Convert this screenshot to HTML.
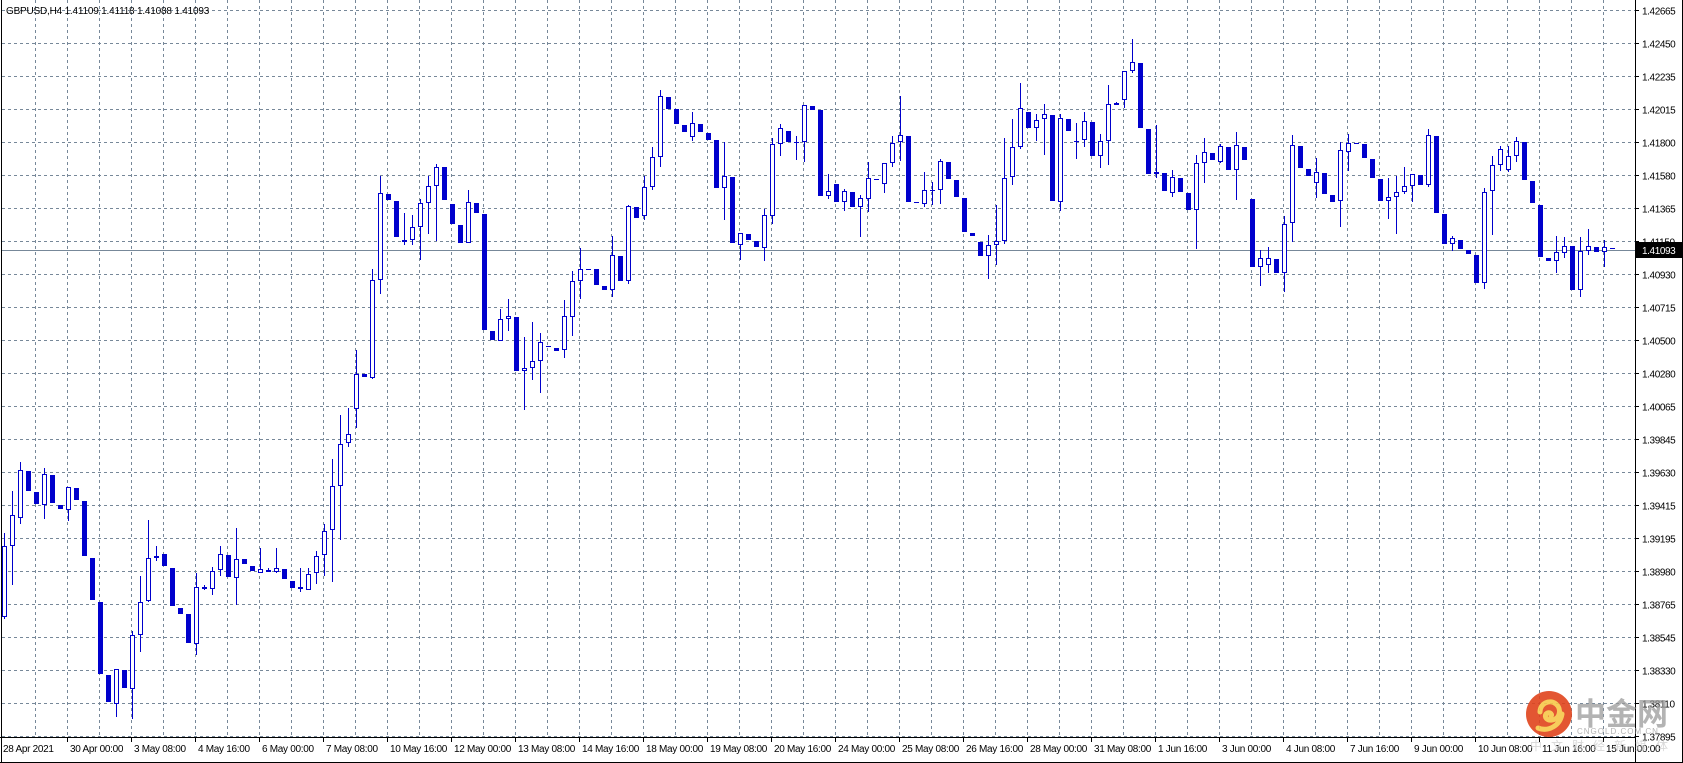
<!DOCTYPE html>
<html><head><meta charset="utf-8">
<style>
html,body{margin:0;padding:0;background:#fff;width:1683px;height:763px;overflow:hidden}
svg{display:block}
text{font-family:"Liberation Sans","Noto Sans CJK SC",sans-serif}
</style></head>
<body>
<svg id="c" width="1683" height="763" xmlns="http://www.w3.org/2000/svg" shape-rendering="crispEdges"></svg>
<script>
var S=document.getElementById('c'),h='';
function add(s){h+=s;}
for(var k=0;k<=22;k++){var y=10.5+33*k;add('<line x1="2" y1="'+y+'" x2="1635" y2="'+y+'" stroke="#778899" stroke-dasharray="3,3"/>');}
for(var k=0;k<=49;k++){var x=35.5+32*k;add('<line x1="'+x+'" y1="0" x2="'+x+'" y2="737" stroke="#778899" stroke-dasharray="3,3"/>');}
add('<line x1="2" y1="250.5" x2="1635" y2="250.5" stroke="#778899"/>');
var sets=[
{o:150,f:3/8,s:0,d:"W 1055 1245 1020 1250|W 973 1055 908 1160|W 853 982 833 998|B 856 908|B 912 945|W 864 947 848 985|B 866 942|B 946 958|W 899 961 899 990|B 901 932|B 935 1083|B 1087 1200|B 1204 1397|B 1401 1471|W 1385 1476 1383 1513|B 1387 1434|W 1292 1437 1283 1517|W 1204 1293 1135 1338|W 1088 1203 986 1206|W 1082 1089 1055 1097|B 1076 1110|B 1114 1216|B 1220 1237|B 1238 1315|W 1164 1317 1128 1347|W 1166 1169 1160 1172|W 1122 1170 1113 1187|W 1077 1121 1055 1136|B 1079 1139|W 1090 1141 1007 1214|B 1091 1105|B 1108 1123|W 1117 1127 1060 1127|W 1119 1121 1115 1125|W 1114 1125 1060 1127|B 1116 1144|B 1148 1168|W 1164 1170 1115 1178|W 1130 1173 1115 1173|W 1082 1128 1068 1158|W 1016 1080 996 1137|W 897 1013 824 1152|W 785 896 707 1040|W 756 782 688 792|W 596 691 533 742|B 598 605|W 346 607 318 610|W 115 346 68 383|B 117 132|B 136 233|W 239 245 167 253"},
{o:60,f:1/3,s:51,d:"W 502 540 465 556|W 430 502 418 600|W 379 430 348 521|W 320 379 312 543|B 322 419|B 433 491|B 495 548|W 427 550 390 550|B 429 458|B 462 809|B 814 840|W 778 842 747 842|W 769 778 717 812|B 771 932|W 925 934 831 1049|W 904 925 786 959|W 847 904 819 998|B 857 860|B 864 872|W 769 871 720 895|W 664 770 632 827|W 628 664 565 718|B 627 630|B 628 674|B 678 689|W 586 691 528 711|B 588 662|W 438 664 435 671|B 441 473|W 382 467 348 481|W 292 382 262 389|W 109 292 90 322|B 111 146|B 148 191|B 195 215|W 190 232 156 242|B 192 215|B 219 239|B 240 383|W 349 385 246 479|B 351 548|W 520 556 520 600|B 522 539|B 543 560|W 466 565 448 604|W 253 468 234 491|W 205 253 192 287|B 213 247|B 246 250 228 299|W 136 247 136 305|B 138 149|B 150 407"},
{o:20,f:1/3,s:103,d:"W 514 529 462 536|B 492 545|W 514 547 507 572|B 516 560|W 535 560 525 650|W 475 536 426 576|B 477 480|W 430 493 430 518|W 370 430 348 440|W 346 367 228 422|B 348 545|B 546 550|W 511 553 456 562|B 510 513 487 555|W 424 511 417 551|B 426 476|B 480 530|B 534 635|B 639 647|B 666 707|W 676 709 645 776|W 664 676 555 734|W 475 662 353 671|W 382 472 296 494|W 265 382 189 387|B 276 323|W 300 325 282 362|W 283 298 252 404|B 285 542|W 295 545 282 572|B 297 332|B 364 367 309 416|W 304 361 276 380|B 306 407|W 364 409 342 443|W 253 364 195 434|W 248 252 245 255|W 154 241 154 263|W 127 154 57 158|B 129 323|B 327 461|W 457 463 315 475|B 459 512|W 472 520 450 530|B 474 515|B 519 569|W 430 571 405 686|W 397 430 354 488|B 399 419"},
{o:100,f:1/3,s:152,d:"W 139 185 132 190|B 141 210|W 136 211 96 299|B 141 179|B 297 500|W 475 502 450 557|W 475 496 441 520|B 478 518|W 373 520 348 576|W 136 370 104 425|B 138 203|B 207 227|W 217 250 174 293|B 219 282|B 286 305|W 151 304 126 380|W 130 155 103 213|B 129 132|B 132 173|B 177 233|B 237 302|W 292 304 234 356|W 277 292 227 402|W 259 277 201 283|W 223 257 223 306|B 225 254|W 106 256 88 262|B 108 338|B 342 431|W 415 433 408 452|B 420 446|B 450 461|B 465 548|W 277 550 264 566|W 196 274 168 404|W 148 196 138 212|W 169 211 138 217|W 124 169 110 185|B 126 239|B 243 308|B 315 470|B 474 482|W 457 484 407 518|W 439 459 410 473|B 438 569|W 454 571 410 592|W 438 454 386 464|B 441 455|W 442 457 420 500|B 444 448"}
];
var col='#0000cc';
sets.forEach(function(st){
 st.d.split('|').forEach(function(e,j){
  var p=e.trim().split(/\s+/),t=p[0];
  var cv=function(z){return Math.round(st.o+parseFloat(z)*st.f);};
  var top=cv(p[1]),bot=cv(p[2]);
  var hi=p.length>3?cv(p[3]):top,lo=p.length>4?cv(p[4]):bot;
  if(bot<top+1)bot=top+1;
  var i=st.s+j,cx=4+8*i;
  if(hi<top)add('<line x1="'+(cx+0.5)+'" y1="'+hi+'" x2="'+(cx+0.5)+'" y2="'+top+'" stroke="'+col+'"/>');
  if(lo>bot)add('<line x1="'+(cx+0.5)+'" y1="'+bot+'" x2="'+(cx+0.5)+'" y2="'+lo+'" stroke="'+col+'"/>');
  if(t=='W'){add('<rect x="'+(cx-1.5)+'" y="'+(top+0.5)+'" width="4" height="'+Math.max(bot-top-1,1)+'" fill="#fff" stroke="'+col+'"/>');}
  else{add('<rect x="'+(cx-2)+'" y="'+top+'" width="5" height="'+(bot-top)+'" fill="'+col+'"/>');}
 });
});
add('<line x1="1.5" y1="0" x2="1.5" y2="763" stroke="#000"/>');
add('<line x1="0" y1="737.5" x2="1635" y2="737.5" stroke="#000"/>');
add('<line x1="1635.5" y1="0" x2="1635.5" y2="763" stroke="#000"/>');
add('<line x1="0" y1="762.5" x2="1683" y2="762.5" stroke="#000"/>');
add('<line x1="1682.5" y1="0" x2="1682.5" y2="763" stroke="#000"/>');
var pv=["1.42665","1.42450","1.42235","1.42015","1.41800","1.41580","1.41365","1.41150","1.40930","1.40715","1.40500","1.40280","1.40065","1.39845","1.39630","1.39415","1.39195","1.38980","1.38765","1.38545","1.38330","1.38110","1.37895"];
pv.forEach(function(v,k){var y=10.5+33*k;add('<line x1="1635" y1="'+y+'" x2="1639" y2="'+y+'" stroke="#000"/><text x="1642" y="'+(y+4)+'" font-size="10" letter-spacing="-0.4" fill="#000">'+v+'</text>');});
add('<rect x="1636" y="242" width="46" height="16" fill="#000"/><text x="1642" y="254" font-size="10" letter-spacing="-0.4" fill="#fff">1.41093</text>');
var tl=["28 Apr 2021","30 Apr 00:00","3 May 08:00","4 May 16:00","6 May 00:00","7 May 08:00","10 May 16:00","12 May 00:00","13 May 08:00","14 May 16:00","18 May 00:00","19 May 08:00","20 May 16:00","24 May 00:00","25 May 08:00","26 May 16:00","28 May 00:00","31 May 08:00","1 Jun 16:00","3 Jun 00:00","4 Jun 08:00","7 Jun 16:00","9 Jun 00:00","10 Jun 08:00","11 Jun 16:00","15 Jun 00:00"];
tl.forEach(function(v,i){var x=3+64*i;if(i>0)add('<line x1="'+(x+0.5)+'" y1="737" x2="'+(x+0.5)+'" y2="742" stroke="#000"/>');add('<text x="'+(x+(i>0?3:0))+'" y="752" font-size="10" letter-spacing="-0.3" fill="#000">'+v+'</text>');});
add('<text x="6" y="14" font-size="10" letter-spacing="-0.2" fill="#000">GBPUSD,H4  1.41109 1.41118 1.41088 1.41093</text>');
add('<g shape-rendering="auto" opacity="0.9"><circle cx="1549" cy="714" r="23" fill="#e0441c"/><path d="M1540 712c0-9 10-13 16-8 6 5 4 15-4 16-5 1-8-3-6-6 3-3 7 0 5 2 M1538 728c10 4 22-2 24-14" fill="none" stroke="#f7c84a" stroke-width="5" stroke-linecap="round"/></g>');
add('<g opacity="0.75" shape-rendering="auto"><text x="1575" y="725" font-size="31" font-weight="bold" fill="#9a9a9a">中金网</text><text x="1577" y="734" font-size="8" fill="#9a9a9a" letter-spacing="1">CNGOLD.COM.CN</text></g>');
add('<text x="1530" y="750" font-size="12" fill="#c8c8c8" opacity="0.7" letter-spacing="9">中文财经新媒体</text>');
S.innerHTML=h;
</script>
</body></html>
